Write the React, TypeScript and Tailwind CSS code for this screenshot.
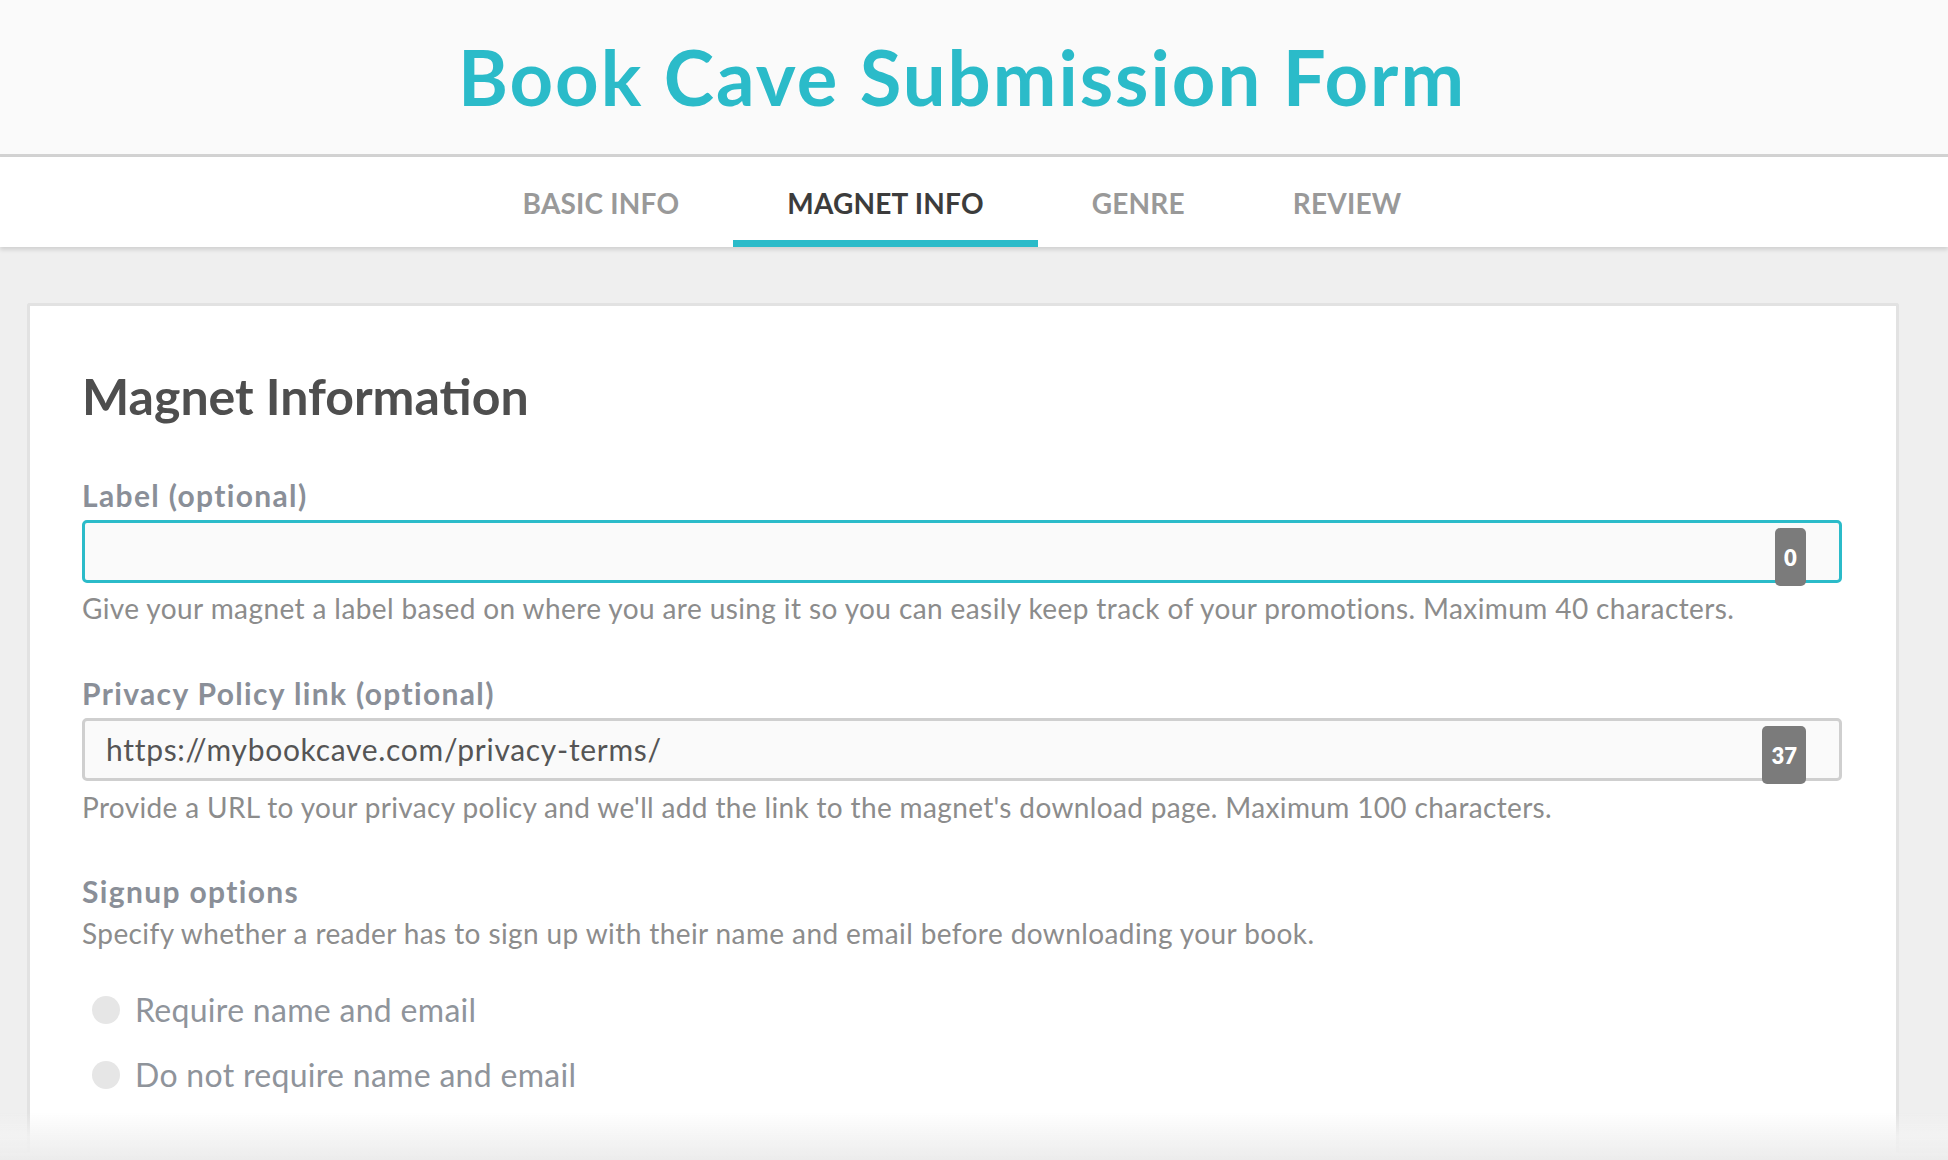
import React from "react";

const font = { fontFamily: "Lato, 'Noto Sans', sans-serif" };

function Badge({ value }: { value: string }) {
  return (
    <div className="absolute right-[36px] top-[8px] flex h-[58px] min-w-[31px] items-center justify-center rounded-[5px] bg-[#7b7b7b] px-[9px] text-[22px] font-extrabold text-white">
      {value}
    </div>
  );
}

export default function App() {
  return (
    <div className="min-h-[1160px] w-full bg-[#efefef]" style={font}>
      <header className="flex h-[157px] items-center justify-center border-b-[3px] border-[#d2d2d2] bg-[#fafafa] pr-[24px]">
        <h1 className="text-[76px] font-bold leading-none tracking-[2px] text-[#2bbbc9]">
          Book Cave Submission Form
        </h1>
      </header>
      <nav className="relative flex h-[90px] justify-center bg-white pr-[24px] shadow-[0_3px_4px_rgba(0,0,0,0.12)]">
        {[
          ["BASIC INFO", false],
          ["MAGNET INFO", true],
          ["GENRE", false],
          ["REVIEW", false],
        ].map(([t, active]) => (
          <div
            key={t as string}
            className={
              "flex items-center px-[54px] pt-[9px] text-[28px] font-bold tracking-[0.2px] " +
              (active
                ? "border-b-[7px] border-[#2bbbc9] text-[#3c3c3c]"
                : "border-b-[7px] border-transparent text-[#999999]")
            }
          >
            {t}
          </div>
        ))}
      </nav>
      <main className="pt-[56px]">
        <div className="ml-[27px] w-[1872px] rounded-t-[3px] border-[3px] border-b-0 border-[#e2e2e2] bg-white pl-[52px] pr-[54px] pt-[60px] pb-[60px]">
          <h2 className="text-[50px] font-bold leading-[1.2] text-[#4e4e4e]">Magnet Information</h2>

          <div className="mt-[52px]">
            <label className="block text-[30px] font-bold leading-[34px] tracking-[1.35px] text-[#8a8f98]">Label (optional)</label>
            <div className="relative mt-[8px]">
              <div className="h-[63px] rounded-[5px] border-[3px] border-[#2bbbc9] bg-[#fafafa]" />
              <Badge value="0" />
            </div>
            <p className="mt-[7px] text-[28px] leading-[36px] tracking-[0.4px] text-[#8c8c8c]">
              Give your magnet a label based on where you are using it so you can easily keep track of your promotions. Maximum 40 characters.
            </p>
          </div>

          <div className="mt-[50px]">
            <label className="block text-[30px] font-bold leading-[34px] tracking-[1.35px] text-[#8a8f98]">Privacy Policy link (optional)</label>
            <div className="relative mt-[8px]">
              <div className="flex h-[63px] items-center rounded-[5px] border-[3px] border-[#cfcfcf] bg-[#fafafa] pl-[21px] text-[30px] tracking-[0.7px] text-[#555555]">
                https://mybookcave.com/privacy-terms/
              </div>
              <Badge value="37" />
            </div>
            <p className="mt-[8px] text-[28px] leading-[36px] tracking-[0.35px] text-[#8c8c8c]">
              Provide a URL to your privacy policy and we'll add the link to the magnet's download page. Maximum 100 characters.
            </p>
          </div>

          <div className="mt-[49px]">
            <label className="block text-[30px] font-bold leading-[34px] tracking-[1.35px] text-[#8a8f98]">Signup options</label>
            <p className="mt-[7px] text-[28px] leading-[36px] tracking-[0.4px] text-[#8c8c8c]">
              Specify whether a reader has to sign up with their name and email before downloading your book.
            </p>
            <div className="mt-[41px] flex flex-col gap-[29px] pl-[10px]">
              {["Require name and email", "Do not require name and email"].map((t) => (
                <label key={t} className="flex items-center gap-[15px] text-[32px] leading-[36px] tracking-[0.3px] text-[#8f949b]">
                  <span className="h-[28px] w-[28px] rounded-full bg-[#e6e6e6]" />
                  {t}
                </label>
              ))}
            </div>
          </div>
        </div>
      </main>
      <div className="pointer-events-none fixed bottom-0 left-0 h-[48px] w-full bg-gradient-to-b from-[rgba(245,245,245,0)] via-[rgba(243,243,243,0.8)] to-[#ececec]" />
    </div>
  );
}
